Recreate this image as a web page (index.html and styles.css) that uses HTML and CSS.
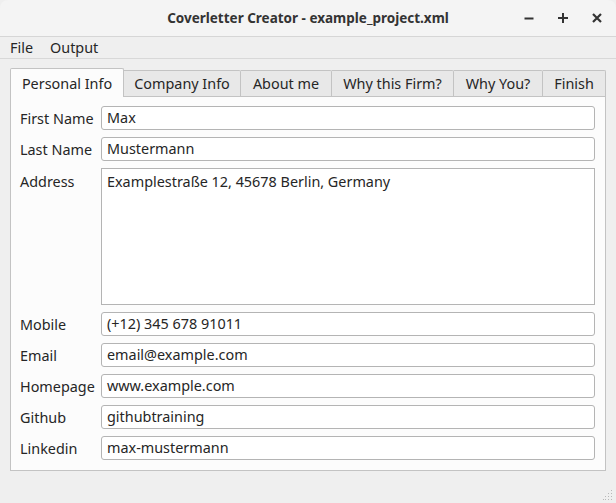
FILE: index.html
```html
<!DOCTYPE html>
<html>
<head>
<meta charset="utf-8">
<link rel="stylesheet" href="styles.css">
</head>
<body>
<div class="window">
  <div class="titlebar">
    <div class="title">Coverletter Creator - example_project.xml</div>
    <div class="controls">
      <svg class="ctl" width="12" height="12" viewBox="0 0 12 12"><path d="M1.5 6.5h9" stroke="#333" stroke-width="2"/></svg>
      <svg class="ctl" width="12" height="12" viewBox="0 0 12 12"><path d="M1 6h10M6 1v10" stroke="#333" stroke-width="2"/></svg>
      <svg class="ctl" width="12" height="12" viewBox="0 0 12 12"><path d="M2 2l8 8M10 2l-8 8" stroke="#333" stroke-width="2.2"/></svg>
    </div>
  </div>
  <div class="menubar">
    <span class="menu">File</span>
    <span class="menu">Output</span>
  </div>
  <div class="content">
    <div class="tabs">
      <div class="tab active w1">Personal Info</div>
      <div class="tab w2">Company Info</div>
      <div class="tab w3">About me</div>
      <div class="tab w4">Why this Firm?</div>
      <div class="tab w5">Why You?</div>
      <div class="tab w6">Finish</div>
    </div>
    <div class="panel">
      <div class="form">
        <label class="lbl">First Name</label><div class="field">Max</div>
        <label class="lbl">Last Name</label><div class="field">Mustermann</div>
        <label class="lbl lbl-top">Address</label><div class="area">Examplestraße 12, 45678 Berlin, Germany</div>
        <label class="lbl">Mobile</label><div class="field">(+12) 345 678 91011</div>
        <label class="lbl">Email</label><div class="field">email@example.com</div>
        <label class="lbl">Homepage</label><div class="field">www.example.com</div>
        <label class="lbl">Github</label><div class="field">githubtraining</div>
        <label class="lbl">Linkedin</label><div class="field">max-mustermann</div>
      </div>
    </div>
  </div>
  <div class="grip">
    <svg width="10" height="10" viewBox="0 0 10 10" fill="#b8b8b8">
      <rect x="8" y="0" width="1" height="1"/>
      <rect x="5" y="3" width="1" height="1"/><rect x="8" y="3" width="1" height="1"/>
      <rect x="2" y="6" width="1" height="1"/><rect x="5" y="6" width="1" height="1"/><rect x="8" y="6" width="1" height="1"/>
      <rect x="0" y="9" width="1" height="1"/><rect x="2" y="9" width="1" height="1"/><rect x="5" y="9" width="1" height="1"/><rect x="8" y="9" width="1" height="1"/>
    </svg>
  </div>
</div>
</body>
</html>
```

FILE: styles.css
```css
* { box-sizing: border-box; }
html, body { margin: 0; padding: 0; }
body {
  width: 616px;
  height: 503px;
  overflow: hidden;
  background: #efefef;
  font-family: "Noto Sans", "DejaVu Sans", sans-serif;
  font-size: 14.4px;
  color: #262626;
}
.window {
  position: relative;
  width: 616px;
  height: 503px;
  background: #efefef;
}
.titlebar {
  height: 37px;
  background: #f4f4f4;
  border-bottom: 1px solid #d6d6d6;
  border-radius: 8px 8px 0 0;
  display: flex;
  align-items: center;
  justify-content: center;
  position: relative;
}
.title {
  font-weight: bold;
  font-size: 13.5px;
  color: #333;
}
.controls {
  position: absolute;
  right: 13px;
  top: 12px;
  display: flex;
  gap: 22px;
}
.ctl { display: block; }
.menubar {
  height: 22px;
  border-bottom: 1px solid #d8d8d8;
  display: flex;
  align-items: center;
  padding-left: 10px;
  gap: 17px;
  background: #efefef;
}
.menu { line-height: 20px; }
.content {
  padding: 9px 10px 0 10px;
}
.tabs {
  display: flex;
  align-items: flex-end;
  height: 28px;
  position: relative;
  z-index: 1;
}
.tab {
  height: 26px;
  border: 1px solid #c3c3c3;
  border-left: none;
  border-bottom: none;
  background: #e8e8e8;
  display: flex;
  align-items: center;
  justify-content: center;
  border-radius: 0 2px 0 0;
  white-space: nowrap;
}
.tab.active {
  border-left: 1px solid #c3c3c3;
  background: #fcfcfc;
  border-radius: 2px 2px 0 0;
  margin-bottom: -1px;
  height: 29px;
}
.w1 { width: 114px; }
.w2 { width: 117px; }
.w3 { width: 91px; }
.w4 { width: 122px; }
.w5 { width: 89px; }
.w6 { width: 63px; }
.panel {
  width: 596px;
  height: 375px;
  background: #fcfcfc;
  border: 1px solid #c3c3c3;
  padding: 9px 10px 9px 9px;
}
.form {
  display: grid;
  grid-template-columns: 81px 1fr;
  row-gap: 7px;
}
.lbl {
  display: flex;
  align-items: center;
  height: 24px;
  white-space: nowrap;
}
.lbl-top { align-items: flex-start; padding-top: 4px; height: auto; }
.field {
  height: 24px;
  background: #fff;
  border: 1px solid #b4b4b4;
  border-radius: 3px;
  padding: 0 5px 1px 5px;
  display: flex;
  align-items: center;
  white-space: nowrap;
}
.area {
  height: 137px;
  background: #fff;
  border: 1px solid #b4b4b4;
  padding: 3px 5px;
}
.grip {
  position: absolute;
  right: 3px;
  bottom: 3px;
  line-height: 0;
}
```
